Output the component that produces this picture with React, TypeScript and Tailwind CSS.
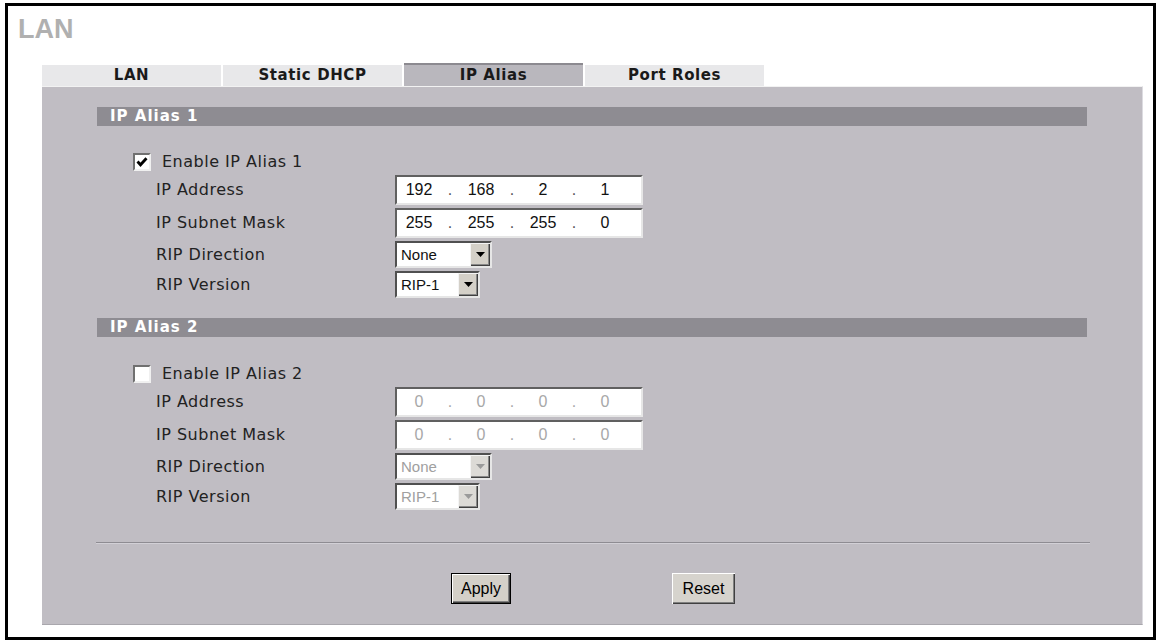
import React from "react";

const labelCls =
  "font-['DejaVu_Sans',sans-serif] text-[16px] tracking-[0.5px] text-[#222] leading-none";

function Checkbox({ checked }: { checked: boolean }) {
  return (
    <div className="w-[18px] h-[18px] bg-white border-2 border-t-[#707070] border-l-[#707070] border-b-[#f0f0f0] border-r-[#f0f0f0] flex items-center justify-center">
      {checked && (
        <svg width="12" height="12" viewBox="0 0 12 12">
          <polyline
            points="1.5,5.5 4.5,8.8 10.5,2.2"
            fill="none"
            stroke="#000"
            strokeWidth="2.8"
          />
        </svg>
      )}
    </div>
  );
}

function IpInput({ values, disabled }: { values: string[]; disabled?: boolean }) {
  const txt = disabled ? "text-[#a8a8a8]" : "text-[#111]";
  const dot = disabled ? "text-[#a8a8a8]" : "text-[#555]";
  return (
    <div className="w-[248px] h-[30px] bg-white border-2 border-t-[#606060] border-l-[#606060] border-b-[#e6e6e6] border-r-[#e6e6e6] flex items-center font-['Liberation_Sans',Arial,sans-serif] text-[16px] leading-none">
      {values.map((v, i) => (
        <React.Fragment key={i}>
          {i > 0 && <span className={`w-[18px] text-center ${dot}`}>.</span>}
          <span className={`w-[44px] text-center ${txt}`}>{v}</span>
        </React.Fragment>
      ))}
    </div>
  );
}

function Select({
  value,
  width,
  disabled,
}: {
  value: string;
  width: "w-[97px]" | "w-[85px]";
  disabled?: boolean;
}) {
  return (
    <div
      className={`${width} h-[27px] bg-white border-2 border-t-[#505050] border-l-[#505050] border-b-[#e6e6e6] border-r-[#e6e6e6] flex items-stretch font-['Liberation_Sans',Arial,sans-serif] text-[15px] leading-none`}
    >
      <div
        className={`flex-1 flex items-center pl-[4px] ${
          disabled ? "text-[#a0a0a0]" : "text-[#111]"
        }`}
      >
        {value}
      </div>
      <div
        className={`w-[20px] flex items-center justify-center ${
          disabled ? "bg-[#dcdad6]" : "bg-[#d4d0c8]"
        } shadow-[inset_1px_1px_0_#f4f4f4,inset_-1px_-1px_0_#404040,inset_-2px_-2px_0_#888]`}
      >
        <svg width="9" height="5" viewBox="0 0 9 5">
          <polygon points="0,0 9,0 4.5,5" fill={disabled ? "#9a9a9a" : "#000"} />
        </svg>
      </div>
    </div>
  );
}

function Section({
  n,
  enabled,
  ip,
  mask,
}: {
  n: number;
  enabled: boolean;
  ip: string[];
  mask: string[];
}) {
  return (
    <div className="flex flex-col">
      <div className="w-[990px] h-[19px] bg-[#8e8c92] flex items-center pl-[13px] font-['DejaVu_Sans',sans-serif] font-bold text-[15px] tracking-[1px] text-white leading-none">
        IP Alias {n}
      </div>
      <div className={`${n === 1 ? "mt-[23px]" : "mt-[24px]"} h-[26px] flex items-center pl-[36px]`}>
        <Checkbox checked={enabled} />
        <span className={`ml-[11px] ${labelCls}`}>Enable IP Alias {n}</span>
      </div>
      <div className="h-[30px] flex items-center pl-[59px]">
        <span className={`w-[239px] ${labelCls}`}>IP Address</span>
        <IpInput values={ip} disabled={!enabled} />
      </div>
      <div className="mt-[3px] h-[30px] flex items-center pl-[59px]">
        <span className={`w-[239px] ${labelCls}`}>IP Subnet Mask</span>
        <IpInput values={mask} disabled={!enabled} />
      </div>
      <div className="mt-[3px] h-[27px] flex items-center pl-[59px]">
        <span className={`w-[239px] ${labelCls}`}>RIP Direction</span>
        <Select value="None" width="w-[97px]" disabled={!enabled} />
      </div>
      <div className="mt-[3px] h-[27px] flex items-center pl-[59px]">
        <span className={`w-[239px] ${labelCls}`}>RIP Version</span>
        <Select value="RIP-1" width="w-[85px]" disabled={!enabled} />
      </div>
    </div>
  );
}

export default function App() {
  const tabs = ["LAN", "Static DHCP", "IP Alias", "Port Roles"];
  return (
    <div className="bg-white w-[1159px] h-[642px] pt-[3px] pl-[5px]">
      <div className="w-[1151px] h-[637px] border-[3px] border-black bg-white flex flex-col">
        <div className="h-[57px] pt-[10px] pl-[10px]">
          <div className="font-['Liberation_Sans',Arial,sans-serif] font-bold text-[27px] leading-[27px] text-[#b0b0b0]">
            LAN
          </div>
        </div>
        <div className="ml-[34px] h-[23px] flex items-end gap-[2px]">
          {tabs.map((t) => {
            const active = t === "IP Alias";
            return (
              <div
                key={t}
                className={`w-[179px] flex items-center justify-center font-['DejaVu_Sans',sans-serif] font-bold text-[15px] tracking-[0.6px] text-[#1a1a1a] leading-none ${
                  active
                    ? "h-[23px] bg-[#b9b7bd] border-t-2 border-t-[#8c8a90]"
                    : "h-[21px] bg-[#e8e8ea]"
                }`}
              >
                {t}
              </div>
            );
          })}
        </div>
        <div className="ml-[34px] w-[1101px] h-[539px] bg-[#c0bdc3] border-t border-t-[#f2f2f2] border-r border-r-[#dcdbe0] border-b border-b-[#a9a7ad] pt-[20px] pl-[55px] flex flex-col">
          <Section n={1} enabled={true} ip={["192", "168", "2", "1"]} mask={["255", "255", "255", "0"]} />
          <div className="mt-[20px]">
            <Section n={2} enabled={false} ip={["0", "0", "0", "0"]} mask={["0", "0", "0", "0"]} />
          </div>
          <div className="mt-[32px] -ml-[1px] w-[994px] h-[2px] border-t border-t-[#8e8c92] border-b border-b-[#d2d0d6]" />
          <div className="mt-[29px] flex pl-[354px] font-['Liberation_Sans',Arial,sans-serif] text-[16px] text-black leading-none">
            <div className="w-[60px] h-[31px] border border-black bg-[#d4d0c8] shadow-[inset_1px_1px_0_#fff,inset_-1px_-1px_0_#404040,inset_-2px_-2px_0_#808080] flex items-center justify-center">
              Apply
            </div>
            <div className="ml-[161px] w-[63px] h-[31px] bg-[#d6d3cd] shadow-[inset_1px_1px_0_#fff,inset_-1px_-1px_0_#404040,inset_-2px_-2px_0_#808080] flex items-center justify-center">
              Reset
            </div>
          </div>
        </div>
      </div>
    </div>
  );
}
